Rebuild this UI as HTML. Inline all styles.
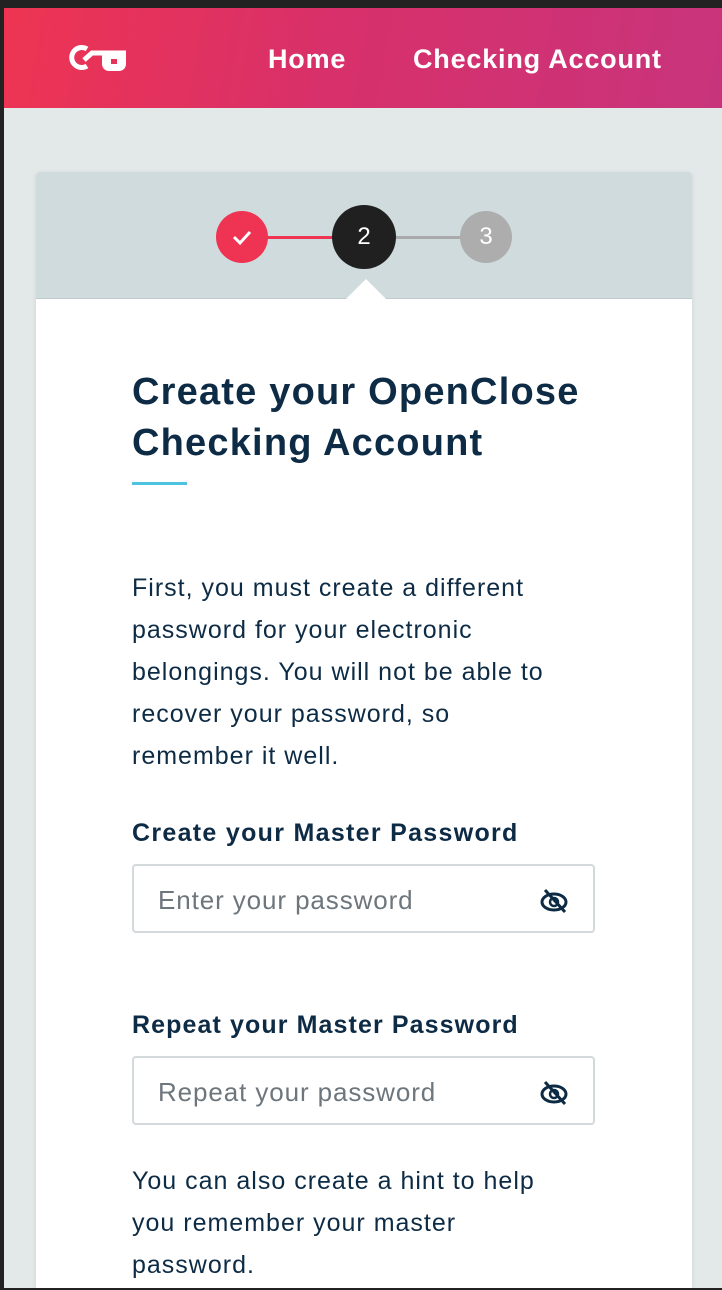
<!DOCTYPE html>
<html><head><style>
*{margin:0;padding:0;box-sizing:border-box}
body{width:722px;height:1290px;overflow:hidden;background:#222;font-family:"Liberation Sans",sans-serif;position:relative}
.pg{position:absolute;left:4px;top:8px;right:0;bottom:2px;background:#e3e9e9;overflow:hidden}
.hd{position:absolute;left:0;top:0;right:0;height:100px;background:linear-gradient(100deg,#ee3452 0%,#d8306a 45%,#c8347c 100%)}
.nav{position:absolute;top:36px;color:#fff;font-weight:bold;font-size:27px;letter-spacing:.8px}
.card{position:absolute;left:32px;top:164px;width:656px;height:1116px;background:#fff;border-radius:4px 4px 0 0;box-shadow:0 1px 4px rgba(0,0,0,.1)}
.band{position:absolute;left:0;top:0;width:656px;height:127px;background:#d0dbdd;border-radius:4px 4px 0 0;border-bottom:1px solid #bfcacc}
.c{position:absolute;border-radius:50%;color:#fff;text-align:center;font-size:24px}
.t{position:absolute;color:#0d2b45}
.ph{position:absolute;left:24px;top:19px;font-size:26px;color:#6d767d;letter-spacing:.9px}
</style></head><body><div class="pg">
<div class="hd">
<svg style="position:absolute;left:60px;top:34px" width="66" height="34" viewBox="0 0 66 34"><path d="M23 7 A10 10 0 1 0 23 24" fill="none" stroke="#fff" stroke-width="5"/><path d="M20 18 L28 11 L62 11" fill="none" stroke="#fff" stroke-width="5"/><path d="M38 11 L62 11 L62 22 A7 7 0 0 1 55 29 L45 29 A7 7 0 0 1 38 22 Z M47 17 L53 17 L53 22 L47 22 Z" fill="#fff" fill-rule="evenodd"/></svg>
<div class="nav" style="left:264px">Home</div>
<div class="nav" style="left:409px">Checking Account</div>
</div>
<div class="card">
<div class="band">
<div style="position:absolute;left:206px;top:64px;width:122px;height:3px;background:#ee3452"></div>
<div style="position:absolute;left:328px;top:64px;width:122px;height:3px;background:#aaa"></div>
<div class="c" style="left:180px;top:39px;width:52px;height:52px;background:#ee3452"><svg width="52" height="52" viewBox="0 0 52 52"><path d="M18 26 L24 32 L34 21" fill="none" stroke="#fff" stroke-width="3"/></svg></div>
<div class="c" style="left:296px;top:33px;width:64px;height:64px;background:#202020;line-height:64px">2</div>
<div class="c" style="left:424px;top:39px;width:52px;height:52px;background:#adadad;line-height:52px">3</div>
<div style="position:absolute;left:310px;top:107px;width:0;height:0;border-left:20px solid transparent;border-right:20px solid transparent;border-bottom:20px solid #fff"></div>
</div>
<div class="t" style="left:96px;top:195px;font-size:38px;line-height:51px;font-weight:bold;letter-spacing:1.2px">Create your OpenClose<br>Checking Account</div>
<div style="position:absolute;left:96px;top:310px;width:55px;height:3px;background:#4ec3e0"></div>
<div class="t" style="left:96px;top:395px;width:440px;font-size:25px;line-height:42px;letter-spacing:1px">First, you must create a different password for your electronic belongings. You will not be able to recover your password, so remember it well.</div>
<div class="t" style="left:96px;top:647px;font-size:25px;font-weight:bold;letter-spacing:1.3px">Create your Master Password</div>
<div style="position:absolute;left:96px;top:692px;width:463px;height:69px;border:2px solid #d4d9dc;border-radius:4px"><span class="ph">Enter your password</span><svg style="position:absolute;left:404px;top:22px" width="34" height="26" viewBox="0 0 34 26"><ellipse cx="16" cy="14" rx="12" ry="8" fill="none" stroke="#0d2b45" stroke-width="3"/><circle cx="16" cy="14" r="4" fill="none" stroke="#0d2b45" stroke-width="2.5"/><path d="M7 2 L27 24" stroke="#0d2b45" stroke-width="3"/></svg></div>
<div class="t" style="left:96px;top:839px;font-size:25px;font-weight:bold;letter-spacing:1.1px">Repeat your Master Password</div>
<div style="position:absolute;left:96px;top:884px;width:463px;height:69px;border:2px solid #d4d9dc;border-radius:4px"><span class="ph">Repeat your password</span><svg style="position:absolute;left:404px;top:22px" width="34" height="26" viewBox="0 0 34 26"><ellipse cx="16" cy="14" rx="12" ry="8" fill="none" stroke="#0d2b45" stroke-width="3"/><circle cx="16" cy="14" r="4" fill="none" stroke="#0d2b45" stroke-width="2.5"/><path d="M7 2 L27 24" stroke="#0d2b45" stroke-width="3"/></svg></div>
<div class="t" style="left:96px;top:988px;width:440px;font-size:25px;line-height:42px;letter-spacing:1px">You can also create a hint to help you remember your master password.</div>
</div>
</div></body></html>
